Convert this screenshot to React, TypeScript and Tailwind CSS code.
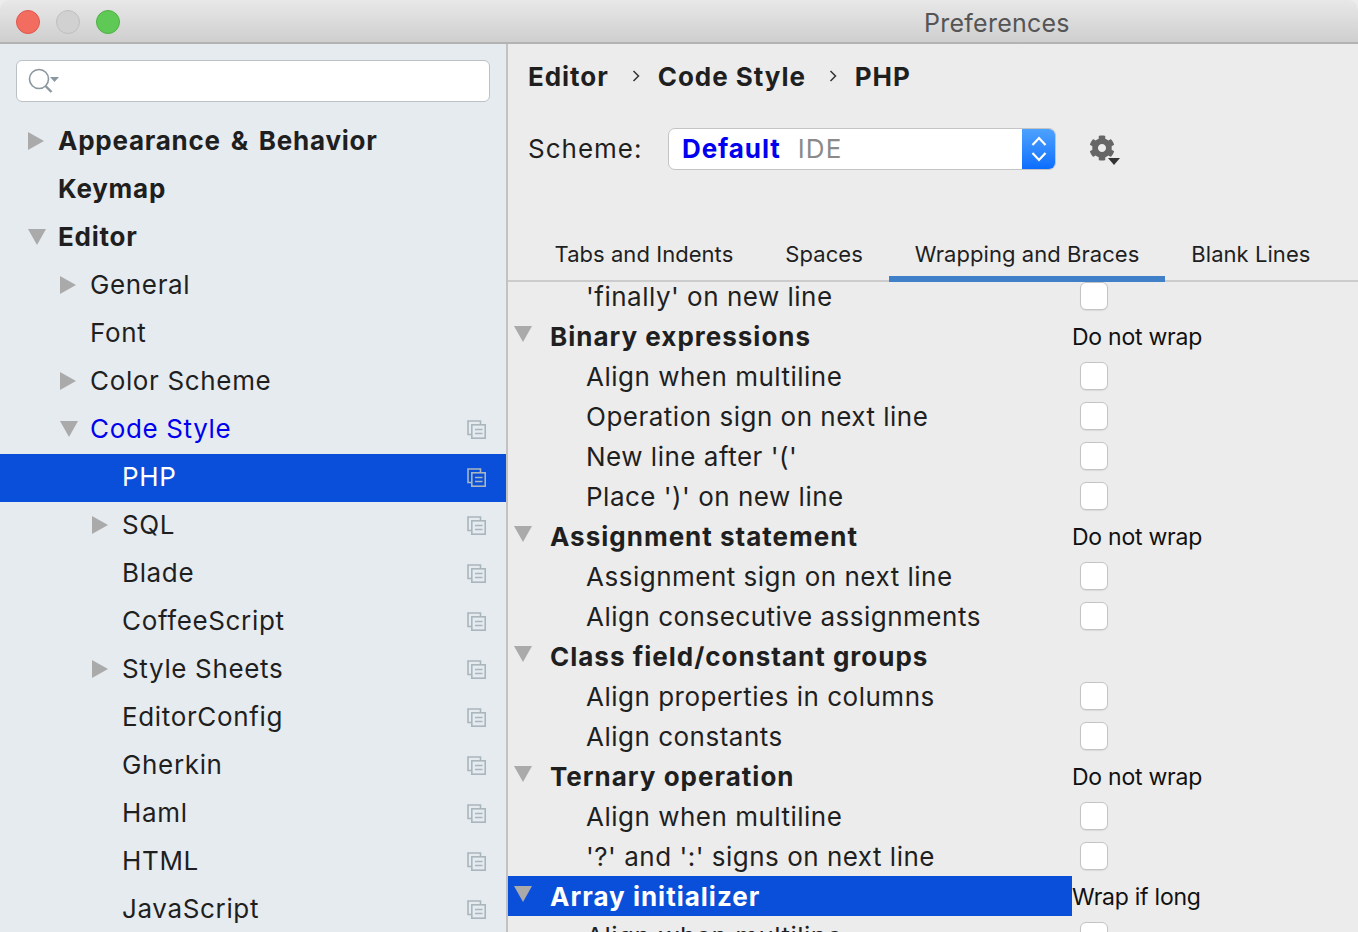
import React from 'react';
import { FaCog } from 'react-icons/fa';

const Collapsed = () => (
  <svg width="16" height="18" viewBox="0 0 16 18" className="block"><path d="M0 0 L16 9 L0 18 Z" fill="#aaaaaa" /></svg>
);

const Expanded = () => (
  <svg width="18" height="16" viewBox="0 0 18 16" className="block"><path d="M0 0 L18 0 L9 16 Z" fill="#aaaaaa" /></svg>
);

const ProjectIcon = () => (
  <svg width="19" height="19" viewBox="0 0 19 19" fill="none" stroke="#a9b6be" strokeWidth="1.6" className="block">
    <path d="M4.5 14.5 H1 V1 H13.5 V4.5" />
    <rect x="4.8" y="4.8" width="13.4" height="13.4" />
    <path d="M8 9.5 H15.5 M8 13.5 H15.5" />
  </svg>
);

type TreeItem = {
  label: string;
  indent: number;
  arrow?: 'open' | 'closed';
  bold?: boolean;
  link?: boolean;
  selected?: boolean;
  project?: boolean;
};

const tree: TreeItem[] = [
  { label: 'Appearance & Behavior', indent: 0, arrow: 'closed', bold: true },
  { label: 'Keymap', indent: 0, bold: true },
  { label: 'Editor', indent: 0, arrow: 'open', bold: true },
  { label: 'General', indent: 1, arrow: 'closed' },
  { label: 'Font', indent: 1 },
  { label: 'Color Scheme', indent: 1, arrow: 'closed' },
  { label: 'Code Style', indent: 1, arrow: 'open', link: true, project: true },
  { label: 'PHP', indent: 2, selected: true, project: true },
  { label: 'SQL', indent: 2, arrow: 'closed', project: true },
  { label: 'Blade', indent: 2, project: true },
  { label: 'CoffeeScript', indent: 2, project: true },
  { label: 'Style Sheets', indent: 2, arrow: 'closed', project: true },
  { label: 'EditorConfig', indent: 2, project: true },
  { label: 'Gherkin', indent: 2, project: true },
  { label: 'Haml', indent: 2, project: true },
  { label: 'HTML', indent: 2, project: true },
  { label: 'JavaScript', indent: 2, project: true },
];

const TreeRow = ({ item }: { item: TreeItem }) => (
  <div className={`flex items-center h-[48px] shrink-0 pr-[20px] pb-[2px] ${item.selected ? 'bg-[#0a4fd9] text-white' : 'text-[#1f1f1f]'}`}>
    <div className={`shrink-0 flex items-center ${item.indent === 0 ? 'w-[58px] pl-[28px]' : item.indent === 1 ? 'w-[90px] pl-[60px]' : 'w-[122px] pl-[92px]'}`}>
      {item.arrow === 'closed' && <Collapsed />}
      {item.arrow === 'open' && <Expanded />}
    </div>
    <span className={`flex-1 pb-[2px] text-[26px] ${item.bold ? 'font-bold tracking-[0.75px] [word-spacing:3px]' : 'tracking-[0.65px]'} ${item.link ? 'text-[#0000ee]' : ''}`}>{item.label}</span>
    {item.project && <ProjectIcon />}
  </div>
);

type Row = { label: string; group?: boolean; value?: string; selected?: boolean };

const rows: Row[] = [
  { label: 'Binary expressions', group: true, value: 'Do not wrap' },
  { label: 'Align when multiline' },
  { label: 'Operation sign on next line' },
  { label: "New line after '('" },
  { label: "Place ')' on new line" },
  { label: 'Assignment statement', group: true, value: 'Do not wrap' },
  { label: 'Assignment sign on next line' },
  { label: 'Align consecutive assignments' },
  { label: 'Class field/constant groups', group: true },
  { label: 'Align properties in columns' },
  { label: 'Align constants' },
  { label: 'Ternary operation', group: true, value: 'Do not wrap' },
  { label: 'Align when multiline' },
  { label: "'?' and ':' signs on next line" },
  { label: 'Array initializer', group: true, value: 'Wrap if long', selected: true },
  { label: 'Align when multiline' },
];

const Checkbox = () => (
  <div className="w-[28px] h-[28px] ml-[8px] rounded-[6px] bg-white border border-[#c4c4c4] shadow-[0_1px_1px_rgba(0,0,0,0.08)]" />
);

const OptionRow = ({ row }: { row: Row }) => (
  <div className="flex items-center h-[40px] shrink-0 text-[#1f1f1f]">
    <div className={`w-[564px] h-full shrink-0 flex items-center ${row.selected ? 'bg-[#0a4fd9] text-white' : ''}`}>
      {row.group ? (
        <>
          <div className="w-[42px] pl-[6px] pb-[4px] shrink-0"><Expanded /></div>
          <span className="text-[26px] font-bold tracking-[1px]">{row.label}</span>
        </>
      ) : (
        <span className="pl-[78px] text-[26px] tracking-[0.5px]">{row.label}</span>
      )}
    </div>
    {row.group ? (
      <span className="pt-[2px] text-[23px] tracking-[-0.25px] text-[#111111]">{row.value}</span>
    ) : (
      <Checkbox />
    )}
  </div>
);

const tabs = ['Tabs and Indents', 'Spaces', 'Wrapping and Braces', 'Blank Lines'];

const Chevron = () => (
  <svg width="8" height="12" viewBox="0 0 8 12" fill="none" stroke="#333333" strokeWidth="1.5" className="ml-[23px] mr-[18px]"><path d="M1.5 1 L6.5 6 L1.5 11" /></svg>
);

export default function App() {
  return (
    <div className="w-[1358px] h-[932px] overflow-hidden flex flex-col bg-[#ececec] font-['Inter','Liberation_Sans',sans-serif]">
      {/* Title bar */}
      <div className="h-[44px] shrink-0 flex items-center pl-[16px] pt-[2px] bg-gradient-to-b from-[#e8e8e8] to-[#cfcfcf] border-b-2 border-[#b3b3b3] rounded-t-[10px]">
        <div className="w-[24px] h-[24px] rounded-full bg-[#f36c60] border border-[#e0574c]" />
        <div className="w-[24px] h-[24px] ml-[16px] rounded-full bg-[#d1d1d1] border border-[#bfbfbf]" />
        <div className="w-[24px] h-[24px] ml-[16px] rounded-full bg-[#5fc955] border border-[#4fb046]" />
        <div className="ml-[804px] mt-[4px] text-[25px] text-[#555555] tracking-[0.25px]">Preferences</div>
      </div>

      <div className="flex-1 flex min-h-0">
        {/* Sidebar */}
        <div className="w-[508px] shrink-0 flex flex-col bg-[#e6ebf0] border-r-2 border-[#c2c2c2] overflow-hidden">
          <div className="mt-[16px] mx-[16px] h-[42px] shrink-0 flex items-center pl-[11px] bg-white rounded-[6px] border border-[#bcc1c6]">
            <svg width="34" height="26" viewBox="0 0 34 26" fill="none" className="block">
              <circle cx="11" cy="11" r="9.5" stroke="#8b979f" strokeWidth="1.6" />
              <path d="M17.5 18 L23.5 24" stroke="#8b979f" strokeWidth="2.4" />
              <path d="M22 9 H31 L26.5 14 Z" fill="#8b979f" />
            </svg>
          </div>
          <div className="mt-[16px] flex flex-col">
            {tree.map(item => <TreeRow key={item.label} item={item} />)}
          </div>
        </div>

        {/* Right panel */}
        <div className="flex-1 min-w-0 flex flex-col">
          <div className="mt-[13px] h-[38px] shrink-0 flex items-center pl-[20px] text-[26px] font-bold tracking-[0.95px] text-[#1f1f1f]">
            <span>Editor</span>
            <Chevron />
            <span>Code Style</span>
            <Chevron />
            <span>PHP</span>
          </div>

          <div className="mt-[33px] h-[42px] shrink-0 flex items-center pl-[20px]">
            <span className="w-[140px] pb-[2px] text-[26px] tracking-[1px] text-[#1f1f1f]">Scheme:</span>
            <div className="w-[388px] h-[42px] flex items-stretch bg-white rounded-[7px] border border-[#c4c4c4] overflow-hidden">
              <div className="flex-1 flex items-center pl-[13px] pb-[2px] text-[26px]">
                <span className="font-bold text-[#0000ee] tracking-[0.9px]">Default</span>
                <span className="ml-[17px] text-[#8a8a8a] tracking-[1.2px]">IDE</span>
              </div>
              <div className="w-[33px] flex items-center justify-center bg-gradient-to-b from-[#4da2ff] to-[#0a6dff]">
                <svg width="18" height="28" viewBox="0 0 18 28" fill="none" stroke="white" strokeWidth="2.2"><path d="M2.5 10 L9 3 L15.5 10 M2.5 18 L9 25 L15.5 18" /></svg>
              </div>
            </div>
            <div className="relative ml-[33px] w-[34px] h-[34px]">
              <FaCog className="text-[#666666] w-[26px] h-[26px] mt-[3px]" />
              <svg width="12" height="7" viewBox="0 0 12 7" className="absolute left-[19px] top-[26px]"><path d="M0 0 H12 L6 7 Z" fill="#333333" /></svg>
            </div>
          </div>

          <div className="mt-[68px] h-[44px] shrink-0 flex pl-[20.5px] border-b-2 border-[#cccccc]">
            {tabs.map(t => (
              <div key={t} className={`h-[44px] px-[26px] pb-[6px] flex items-center whitespace-nowrap border-b-[6px] text-[22px] tracking-[0.05px] text-[#1f1f1f] ${t === 'Wrapping and Braces' ? 'border-[#3f80c8]' : 'border-transparent'}`}>{t}</div>
            ))}
          </div>

          <div className="flex-1 min-h-0 overflow-hidden flex flex-col">
            <div className="flex items-start h-[34px] shrink-0 text-[#1f1f1f]">
              <span className="w-[564px] shrink-0 pl-[78px] text-[26px] tracking-[0.5px] leading-[30px]">'finally' on new line</span>
              <Checkbox />
            </div>
            {rows.map((r, i) => <OptionRow key={i} row={r} />)}
          </div>
        </div>
      </div>
    </div>
  );
}
